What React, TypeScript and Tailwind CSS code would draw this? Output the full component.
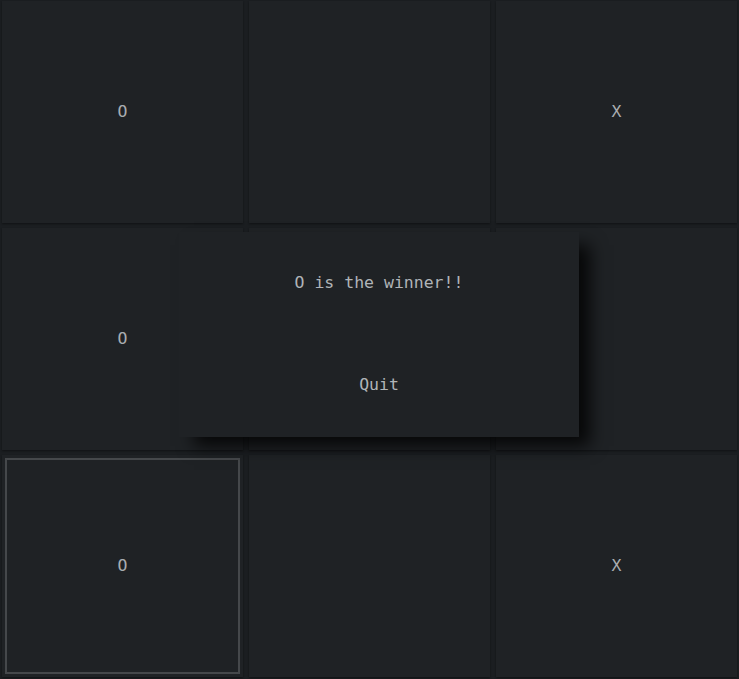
import React from "react";

const cells = ["O", "", "X", "O", "", "", "O", "", "X"];

export default function App() {
  return (
    <div
      className="relative w-[739px] h-[679px] overflow-hidden bg-[#1b1e21]"
      style={{ fontFamily: '"DejaVu Sans Mono", monospace' }}
    >
      <div className="grid grid-cols-3 grid-rows-[222px_222px_222px] gap-x-[6px] gap-y-[5px] px-[2px] pt-[1px]">
        {cells.map((c, i) => (
          <div
            key={i}
            className="relative flex items-center justify-center bg-[#1f2225] shadow-[0_1px_2px_rgba(0,0,0,0.4)] text-[16.5px] text-[#a9adb1]"
          >
            {i === 6 && (
              <div className="absolute left-[3px] top-[3px] right-[3px] bottom-[3px] border-2 border-[#45484b]" />
            )}
            {c}
          </div>
        ))}
      </div>
      <div className="absolute left-[179px] top-[232px] w-[400px] h-[205px] bg-[#1f2225] shadow-[13px_11px_16px_-2px_rgba(0,0,0,0.8)] flex flex-col items-center text-[16.5px] text-[#b0b4b8]">
        <div className="mt-[40px] leading-[22px]">O is the winner!!</div>
        <button className="mt-[80px] leading-[22px] px-3">Quit</button>
      </div>
    </div>
  );
}
